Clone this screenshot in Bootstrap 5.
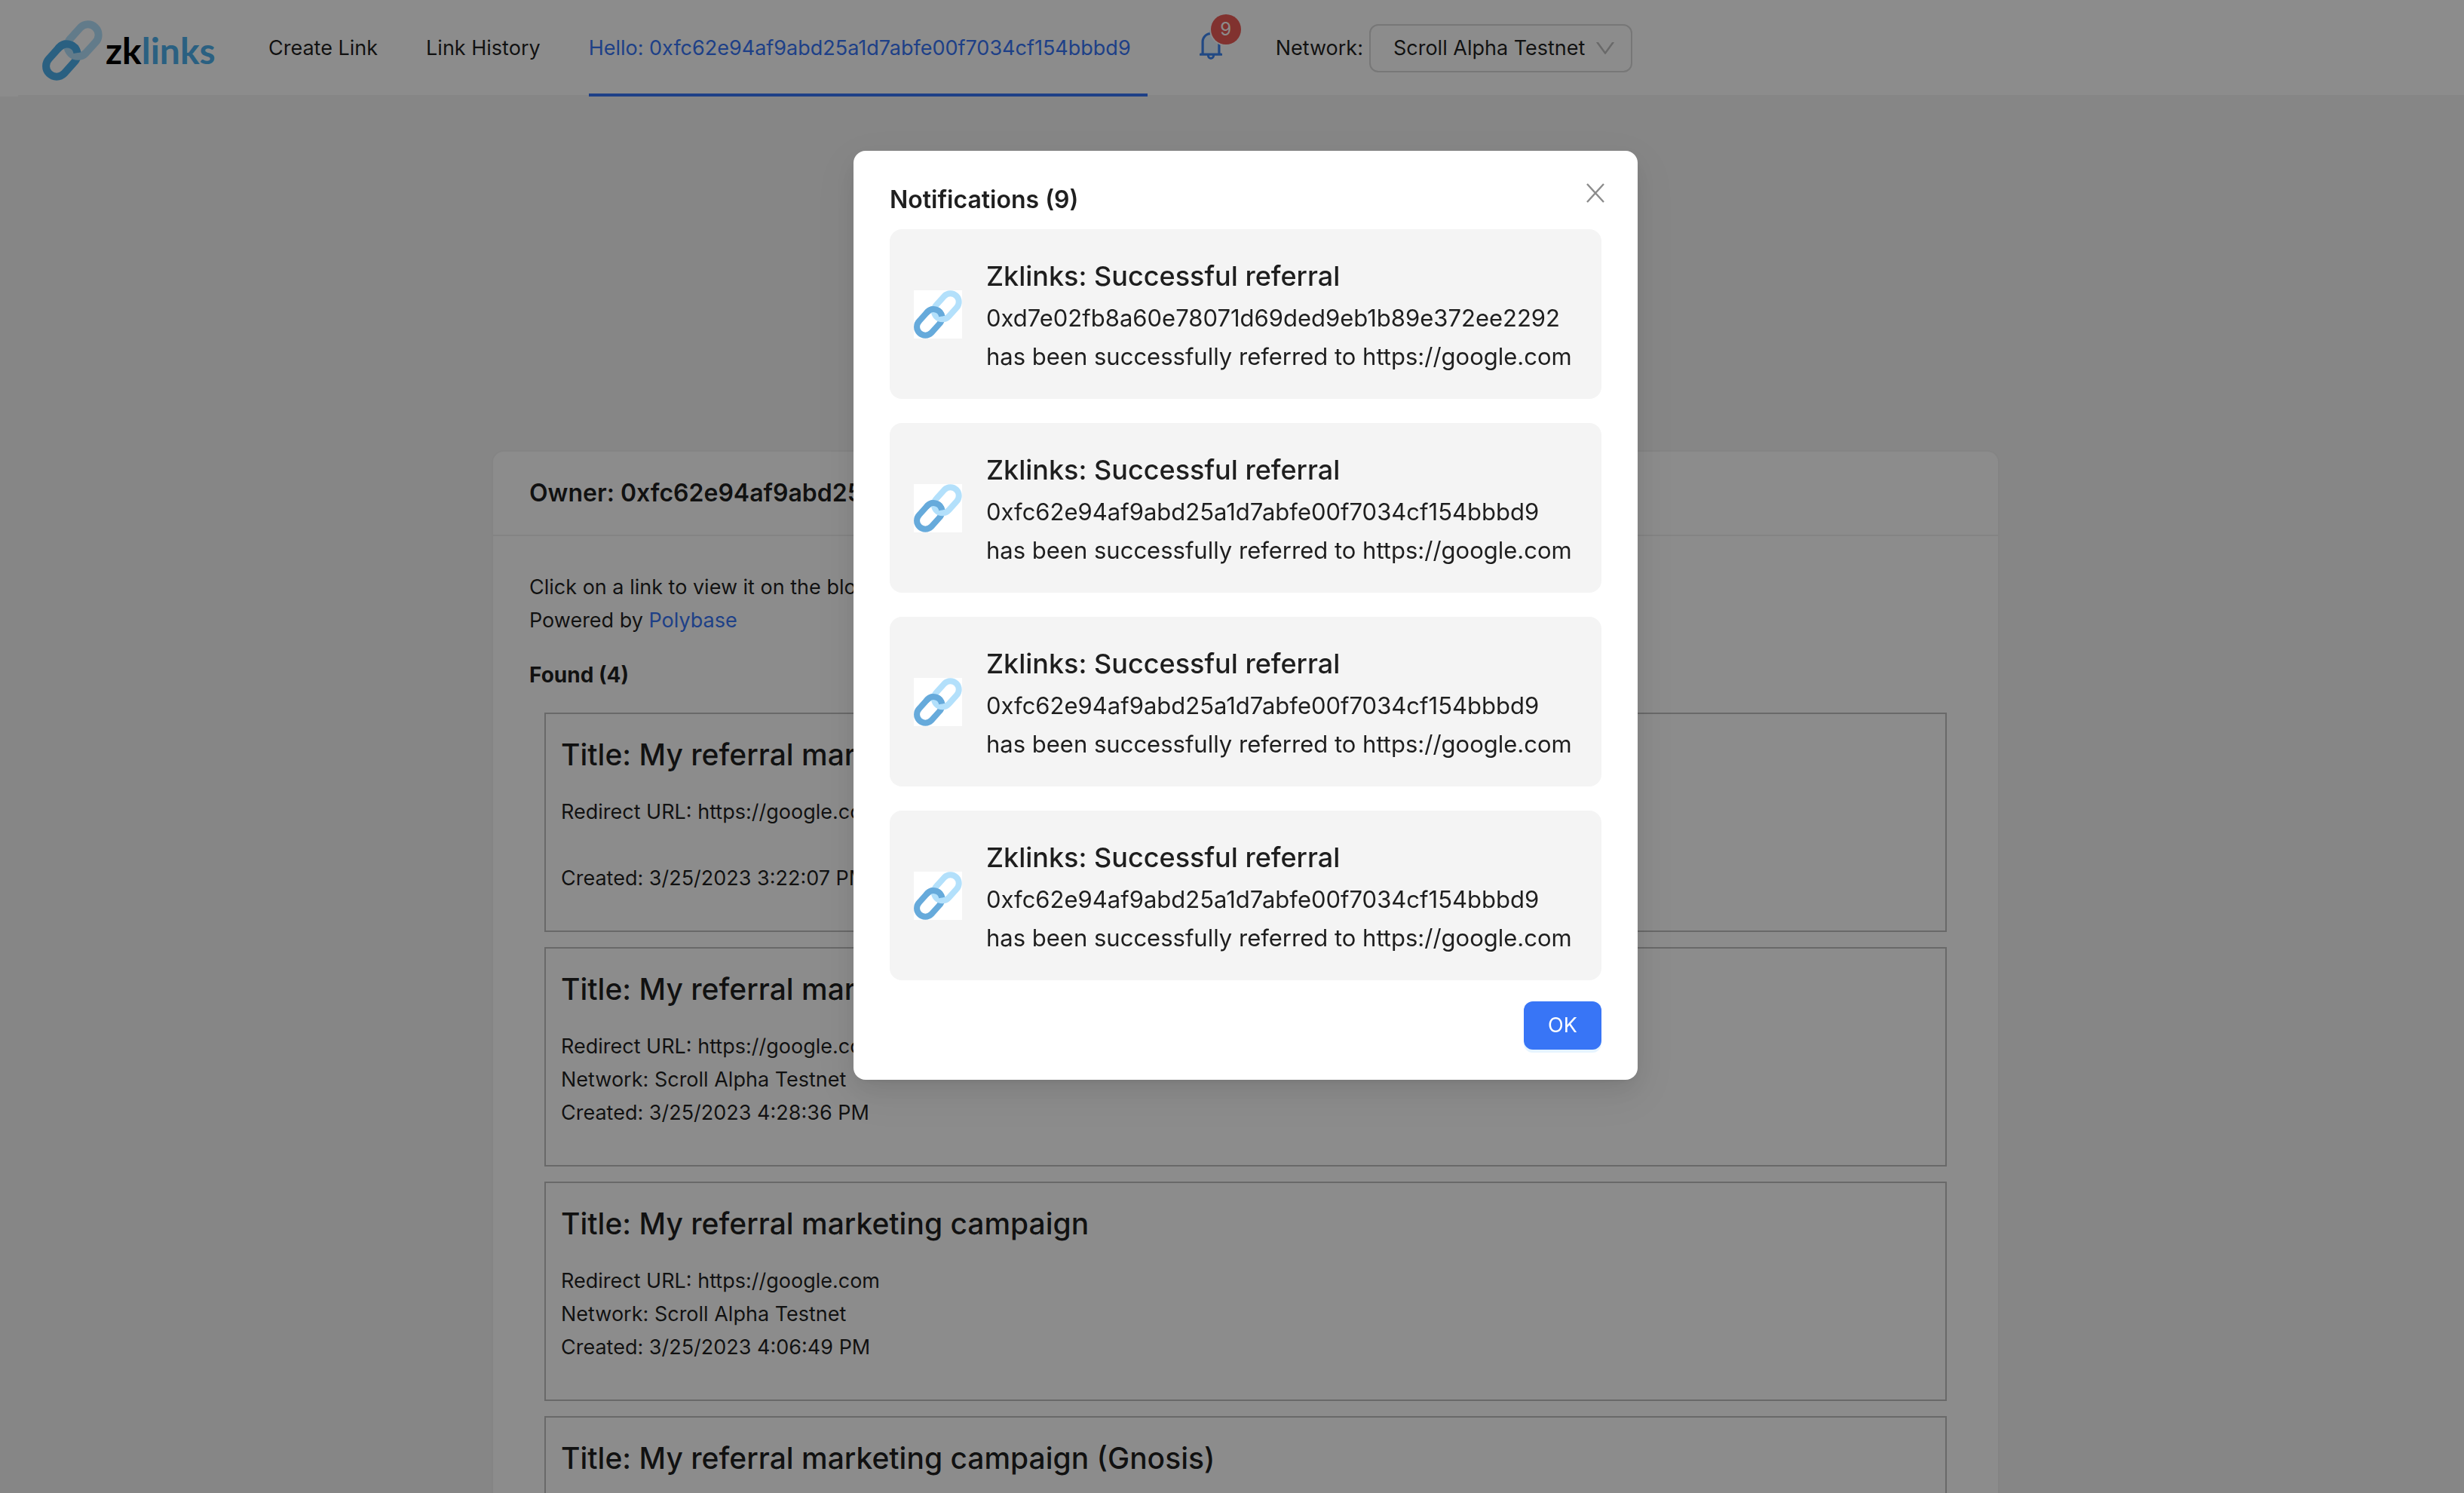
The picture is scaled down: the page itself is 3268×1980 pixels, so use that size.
<!DOCTYPE html>
<html lang="en">
<head>
<meta charset="utf-8">
<meta name="viewport" content="width=device-width, initial-scale=1">
<title>zklinks</title>
<link rel="stylesheet" href="https://cdn.jsdelivr.net/npm/bootstrap@5.3.0/dist/css/bootstrap.min.css">
<style>
:root{--ink:rgba(0,0,0,.88);--blue:#3875f6}
html,body{height:100%;overflow:hidden}
body{font-family:Inter,"Liberation Sans",sans-serif;font-size:27px;line-height:44px;color:var(--ink);background:#f5f5f5}
a{text-decoration:none;color:var(--blue)}
.topbar{height:128px;padding-left:24px;background:#fff}
.topmenu{box-shadow:inset 0 -2px #f5f5f5;height:128px}
.brand{margin-left:32px;width:268px;padding-top:6px;color:#4eb0ec}
.brand-word{font:700 48px/60px Lato,sans-serif;color:#000;margin-left:4px}
.brand-word span{color:#4eb0ec}
.menu-link{margin:0 32px;height:128px;line-height:128px;color:var(--ink);white-space:pre}
.menu-link.current{color:var(--blue);border-bottom:4px solid var(--blue);min-width:741px}
.bell-btn{margin:0 66px 10px 32px;line-height:0}
.bell-count{width:40px;height:40px;line-height:40px;font-size:24px;right:-20px;top:-20px;background:#ec5b56;box-shadow:0 0 0 2px #fff}
.net-pick{height:64px;border:2px solid #d9d9d9;border-radius:12px;width:349px;margin-left:8px}
.net-pick select{appearance:none;padding:0 30px;color:var(--ink);height:60px}
.net-pick svg{right:20px;top:16px}
.stage{padding:469px 0 0 36px}
.owner-card{width:2000px;border:2px solid #f0f0f0;border-radius:16px}
.owner-head{height:112px;line-height:110px;padding:0 48px;font-size:32px;font-weight:600;border-bottom:2px solid #f0f0f0}
.owner-body{padding:46px 48px}
.found{margin:28px 0 28px;font-size:28px}
.link-box{border:2px solid #bfbfbf;height:291px;margin:0 20px 20px;padding:26px 20px}
.link-box h3{font-size:39px;line-height:56px;font-weight:500;margin:0 0 26px}
.dim{background:rgba(0,0,0,.45);padding:200px 0 0 36px;overflow:hidden}
.note-box{width:1040px;padding:40px 48px;border-radius:16px;background:#fff;box-shadow:0 12px 32px rgba(0,0,0,.08),0 6px 12px -8px rgba(0,0,0,.12),0 18px 56px 16px rgba(0,0,0,.05)}
.note-box h2{font-size:32px;line-height:50px;font-weight:600;margin:0 0 14px}
.close-x{right:36px;top:36px;width:40px;height:40px;line-height:0}
.note-item{background:#f4f4f4;border-radius:16px;padding:32px 32px 31px;font-size:31px;line-height:51px;margin-bottom:32px}
.note-item h4{font-size:36px;line-height:60px;font-weight:500;margin:0}
.note-pic{width:64px;height:64px;background:#fff;color:#66aadb}
.ok-btn{width:103px;height:64px;border-radius:12px;background:var(--blue);color:#fff;box-shadow:0 4px 0 rgba(5,145,255,.1);margin-top:-4px}
</style>
</head>
<body>
<svg class="d-none" aria-hidden="true">
  <symbol id="chain" viewBox="0 0 64 64">
    <g fill="none" stroke-width="8">
      <path stroke="currentColor" d="M7.300 40.600 18.100 28.600A11.200 11.200 0 0 1 34 44.400L23.200 56.400A11.200 11.200 0 0 1 7.300 40.600Z"/>
      <path stroke="#b3e0fb" d="M40.500 7.600 30 19.200A11.200 11.200 0 0 0 46 34.900L56.500 23.300A11.200 11.200 0 0 0 40.500 7.600Z"/>
      <path stroke="currentColor" d="M16.500 30.400 18.100 28.600A11.200 11.200 0 0 1 37.200 34.500"/>
    </g>
  </symbol>
</svg>
<header class="topbar">
  <nav class="topmenu d-flex align-items-center">
    <a class="brand d-flex align-items-center" href="#"><svg width="80" height="80" aria-hidden="true"><use href="#chain"/></svg><span class="brand-word">zk<span>links</span></span></a>
    <a class="menu-link" href="#">Create Link</a>
    <a class="menu-link" href="#">Link History</a>
    <a class="menu-link current" href="#">Hello: 0xfc62e94af9abd25a1d7abfe00f7034cf154bbbd9</a>
    <button class="btn p-0 border-0 bell-btn position-relative" type="button" aria-label="Notifications">
      <svg width="40" height="40" viewBox="64 64 896 896"><path fill="#e6f4ff" d="M512 220c-55.6 0-107.800 21.600-147.100 60.900S304 372.400 304 428v340h416V428c0-55.600-21.600-107.800-60.900-147.100S567.600 220 512 220z"/><path fill="#3d86f0" d="M816 768h-24V428c0-141.100-104.300-257.800-240-277.200V112c0-22.100-17.900-40-40-40s-40 17.900-40 40v38.800C336.300 170.200 232 286.900 232 428v340h-24c-17.700 0-32 14.300-32 32v32c0 4.400 3.600 8 8 8h216c0 61.800 50.200 112 112 112s112-50.200 112-112h216c4.400 0 8-3.600 8-8v-32c0-17.700-14.300-32-32-32zM512 888c-26.500 0-48-21.500-48-48h96c0 26.500-21.500 48-48 48zm208-120H304V428c0-55.600 21.600-107.800 60.900-147.100S456.400 220 512 220s107.800 21.600 147.100 60.900S720 372.400 720 428v340z"/></svg>
      <span class="bell-count position-absolute rounded-circle text-white">9</span>
    </button>
    <label for="network">Network:</label>
    <span class="net-pick position-relative">
      <select id="network" class="w-100 border-0 bg-transparent"><option>Scroll Alpha Testnet</option></select>
      <svg class="position-absolute pe-none" width="28" height="28" viewBox="64 64 896 896" aria-hidden="true"><path fill="#bfbfbf" d="M884 256h-75c-5.100 0-9.900 2.500-12.900 6.600L512 654.200 227.900 262.600c-3-4.100-7.800-6.600-12.900-6.600h-75c-6.500 0-10.300 7.400-6.500 12.700l352.600 486.100c12.800 17.600 39 17.600 51.700 0l352.600-486.100c3.900-5.300.1-12.700-6.400-12.700z"/></svg>
    </span>
  </nav>
</header>
<main class="stage d-flex justify-content-center">
  <section class="owner-card bg-white">
    <div class="owner-head">Owner: 0xfc62e94af9abd25a1d7abfe00f7034cf154bbbd9</div>
    <div class="owner-body">
      <div>Click on a link to view it on the blockchain.</div>
      <div>Powered by <a href="#">Polybase</a></div>
      <div class="found fw-bold">Found (4)</div>
      <article class="link-box"><h3>Title: My referral marketing campaign</h3><div>Redirect URL: https://google.com</div><div>&nbsp;</div><div>Created: 3/25/2023 3:22:07 PM</div></article>
      <article class="link-box"><h3>Title: My referral marketing campaign</h3><div>Redirect URL: https://google.com</div><div>Network: Scroll Alpha Testnet</div><div>Created: 3/25/2023 4:28:36 PM</div></article>
      <article class="link-box"><h3>Title: My referral marketing campaign</h3><div>Redirect URL: https://google.com</div><div>Network: Scroll Alpha Testnet</div><div>Created: 3/25/2023 4:06:49 PM</div></article>
      <article class="link-box"><h3>Title: My referral marketing campaign (Gnosis)</h3></article>
    </div>
  </section>
</main>
<div class="dim position-fixed top-0 start-0 w-100 h-100 d-flex justify-content-center align-items-start">
  <div class="note-box position-relative" role="dialog" aria-labelledby="note-title">
    <button class="btn p-0 border-0 close-x position-absolute" type="button" aria-label="Close"><svg width="24" height="26" viewBox="0 0 24 26"><path d="M1 1 23 25M23 1 1 25" stroke="#8c8c8c" stroke-width="2.400" fill="none"/></svg></button>
    <h2 id="note-title">Notifications (9)</h2>
    <div class="note-item d-flex align-items-center gap-3"><svg class="note-pic me-3 flex-shrink-0"><use href="#chain"/></svg><div><h4>Zklinks: Successful referral</h4><div>0xd7e02fb8a60e78071d69ded9eb1b89e372ee2292</div><div>has been successfully referred to https://google.com</div></div></div>
    <div class="note-item d-flex align-items-center gap-3"><svg class="note-pic me-3 flex-shrink-0"><use href="#chain"/></svg><div><h4>Zklinks: Successful referral</h4><div>0xfc62e94af9abd25a1d7abfe00f7034cf154bbbd9</div><div>has been successfully referred to https://google.com</div></div></div>
    <div class="note-item d-flex align-items-center gap-3"><svg class="note-pic me-3 flex-shrink-0"><use href="#chain"/></svg><div><h4>Zklinks: Successful referral</h4><div>0xfc62e94af9abd25a1d7abfe00f7034cf154bbbd9</div><div>has been successfully referred to https://google.com</div></div></div>
    <div class="note-item d-flex align-items-center gap-3"><svg class="note-pic me-3 flex-shrink-0"><use href="#chain"/></svg><div><h4>Zklinks: Successful referral</h4><div>0xfc62e94af9abd25a1d7abfe00f7034cf154bbbd9</div><div>has been successfully referred to https://google.com</div></div></div>
    <div class="d-flex justify-content-end"><button class="border-0 ok-btn" type="button">OK</button></div>
  </div>
</div>
<script src="https://cdn.jsdelivr.net/npm/bootstrap@5.3.0/dist/js/bootstrap.bundle.min.js"></script>
</body>
</html>
